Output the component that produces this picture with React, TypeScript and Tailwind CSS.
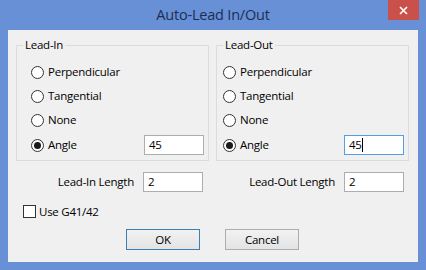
import React from "react";

const FONT = "font-['Open_Sans','Noto_Sans',sans-serif]";

type RadioProps = { label: string; checked?: boolean };

const Radio = ({ label, checked }: RadioProps) => (
  <div className="flex items-center gap-[4px]">
    <span className="w-[13px] h-[13px] rounded-full border border-[#333] bg-white flex items-center justify-center">
      {checked && <span className="w-[7px] h-[7px] rounded-full bg-[#1a1a1a]" />}
    </span>
    <span>{label}</span>
  </div>
);

const TextBox = ({ value, focused }: { value: string; focused?: boolean }) => (
  <div
    className={`w-[60px] h-[20px] bg-white border flex items-center pl-[4px] ${
      focused ? "border-[#569de5]" : "border-[#abadb3]"
    }`}
  >
    <span>{value}</span>
    {focused && <span className="w-px h-[14px] bg-black" />}
  </div>
);

type GroupProps = { title: string; indent: string; focused?: boolean };

const LeadGroup = ({ title, indent, focused }: GroupProps) => (
  <div className={`relative w-[193px] h-[116px] border border-[#dcdcdc] pt-[14px] ${indent} pr-[4px]`}>
    {/* legend sits over the top border */}
    <span className="absolute -top-[9px] left-[6px] bg-[#f0f0f0] px-[2px] leading-[16px]">
      {title}
    </span>
    <div className="h-[24px] flex items-center">
      <Radio label="Perpendicular" />
    </div>
    <div className="h-[24px] flex items-center">
      <Radio label="Tangential" />
    </div>
    <div className="h-[24px] flex items-center">
      <Radio label="None" />
    </div>
    <div className="h-[26px] flex items-center justify-between">
      <Radio label="Angle" checked />
      <TextBox value="45" focused={focused} />
    </div>
  </div>
);

const Button = ({ label, isDefault }: { label: string; isDefault?: boolean }) => (
  <button
    className={`w-[74px] h-[21px] border bg-gradient-to-b from-[#f2f2f2] to-[#e3e3e3] flex items-center justify-center leading-none ${
      isDefault ? "border-[#3c7fb1]" : "border-[#adadad]"
    }`}
  >
    {label}
  </button>
);

export default function App() {
  return (
    <div className={`w-[426px] h-[270px] bg-[#6790d7] flex flex-col text-[11.5px] tracking-[-0.25px] text-black ${FONT}`}>
      {/* Title bar */}
      <div className="h-[30px] flex items-start relative">
        <div className="flex-1 h-[30px] flex items-center justify-center text-[14.5px] tracking-[-0.2px] text-[#1c2f52]">
          Auto-Lead In/Out
        </div>
        <div className="absolute right-[7px] top-0 w-[31px] h-[20px] bg-[#c9504b] flex items-center justify-center">
          <svg width="9" height="9" viewBox="0 0 9 9">
            <path d="M1 1 L8 8 M8 1 L1 8" stroke="#fff" strokeWidth="1.6" />
          </svg>
        </div>
      </div>

      {/* Client area */}
      <div className="mx-[8px] h-[232px] bg-[#f0f0f0] flex flex-col">
        <div className="flex gap-[7px] pl-[8px] pt-[15px]">
          <LeadGroup title="Lead-In" indent="pl-[14px]" />
          <LeadGroup title="Lead-Out" indent="pl-[6px]" focused />
        </div>

        <div className="flex mt-[11px] h-[20px] items-center">
          <div className="w-[195px] flex items-center justify-end gap-[9px]">
            <span>Lead-In Length</span>
            <TextBox value="2" />
          </div>
          <div className="w-[201px] flex items-center justify-end gap-[9px]">
            <span>Lead-Out Length</span>
            <TextBox value="2" />
          </div>
        </div>

        <div className="flex items-center gap-[3px] pl-[15px] mt-[11px]">
          <span className="w-[13px] h-[13px] border border-[#333] bg-white" />
          <span>Use G41/42</span>
        </div>

        <div className="flex gap-[25px] pl-[118px] mt-[9px]">
          <Button label="OK" isDefault />
          <Button label="Cancel" />
        </div>
      </div>
    </div>
  );
}
